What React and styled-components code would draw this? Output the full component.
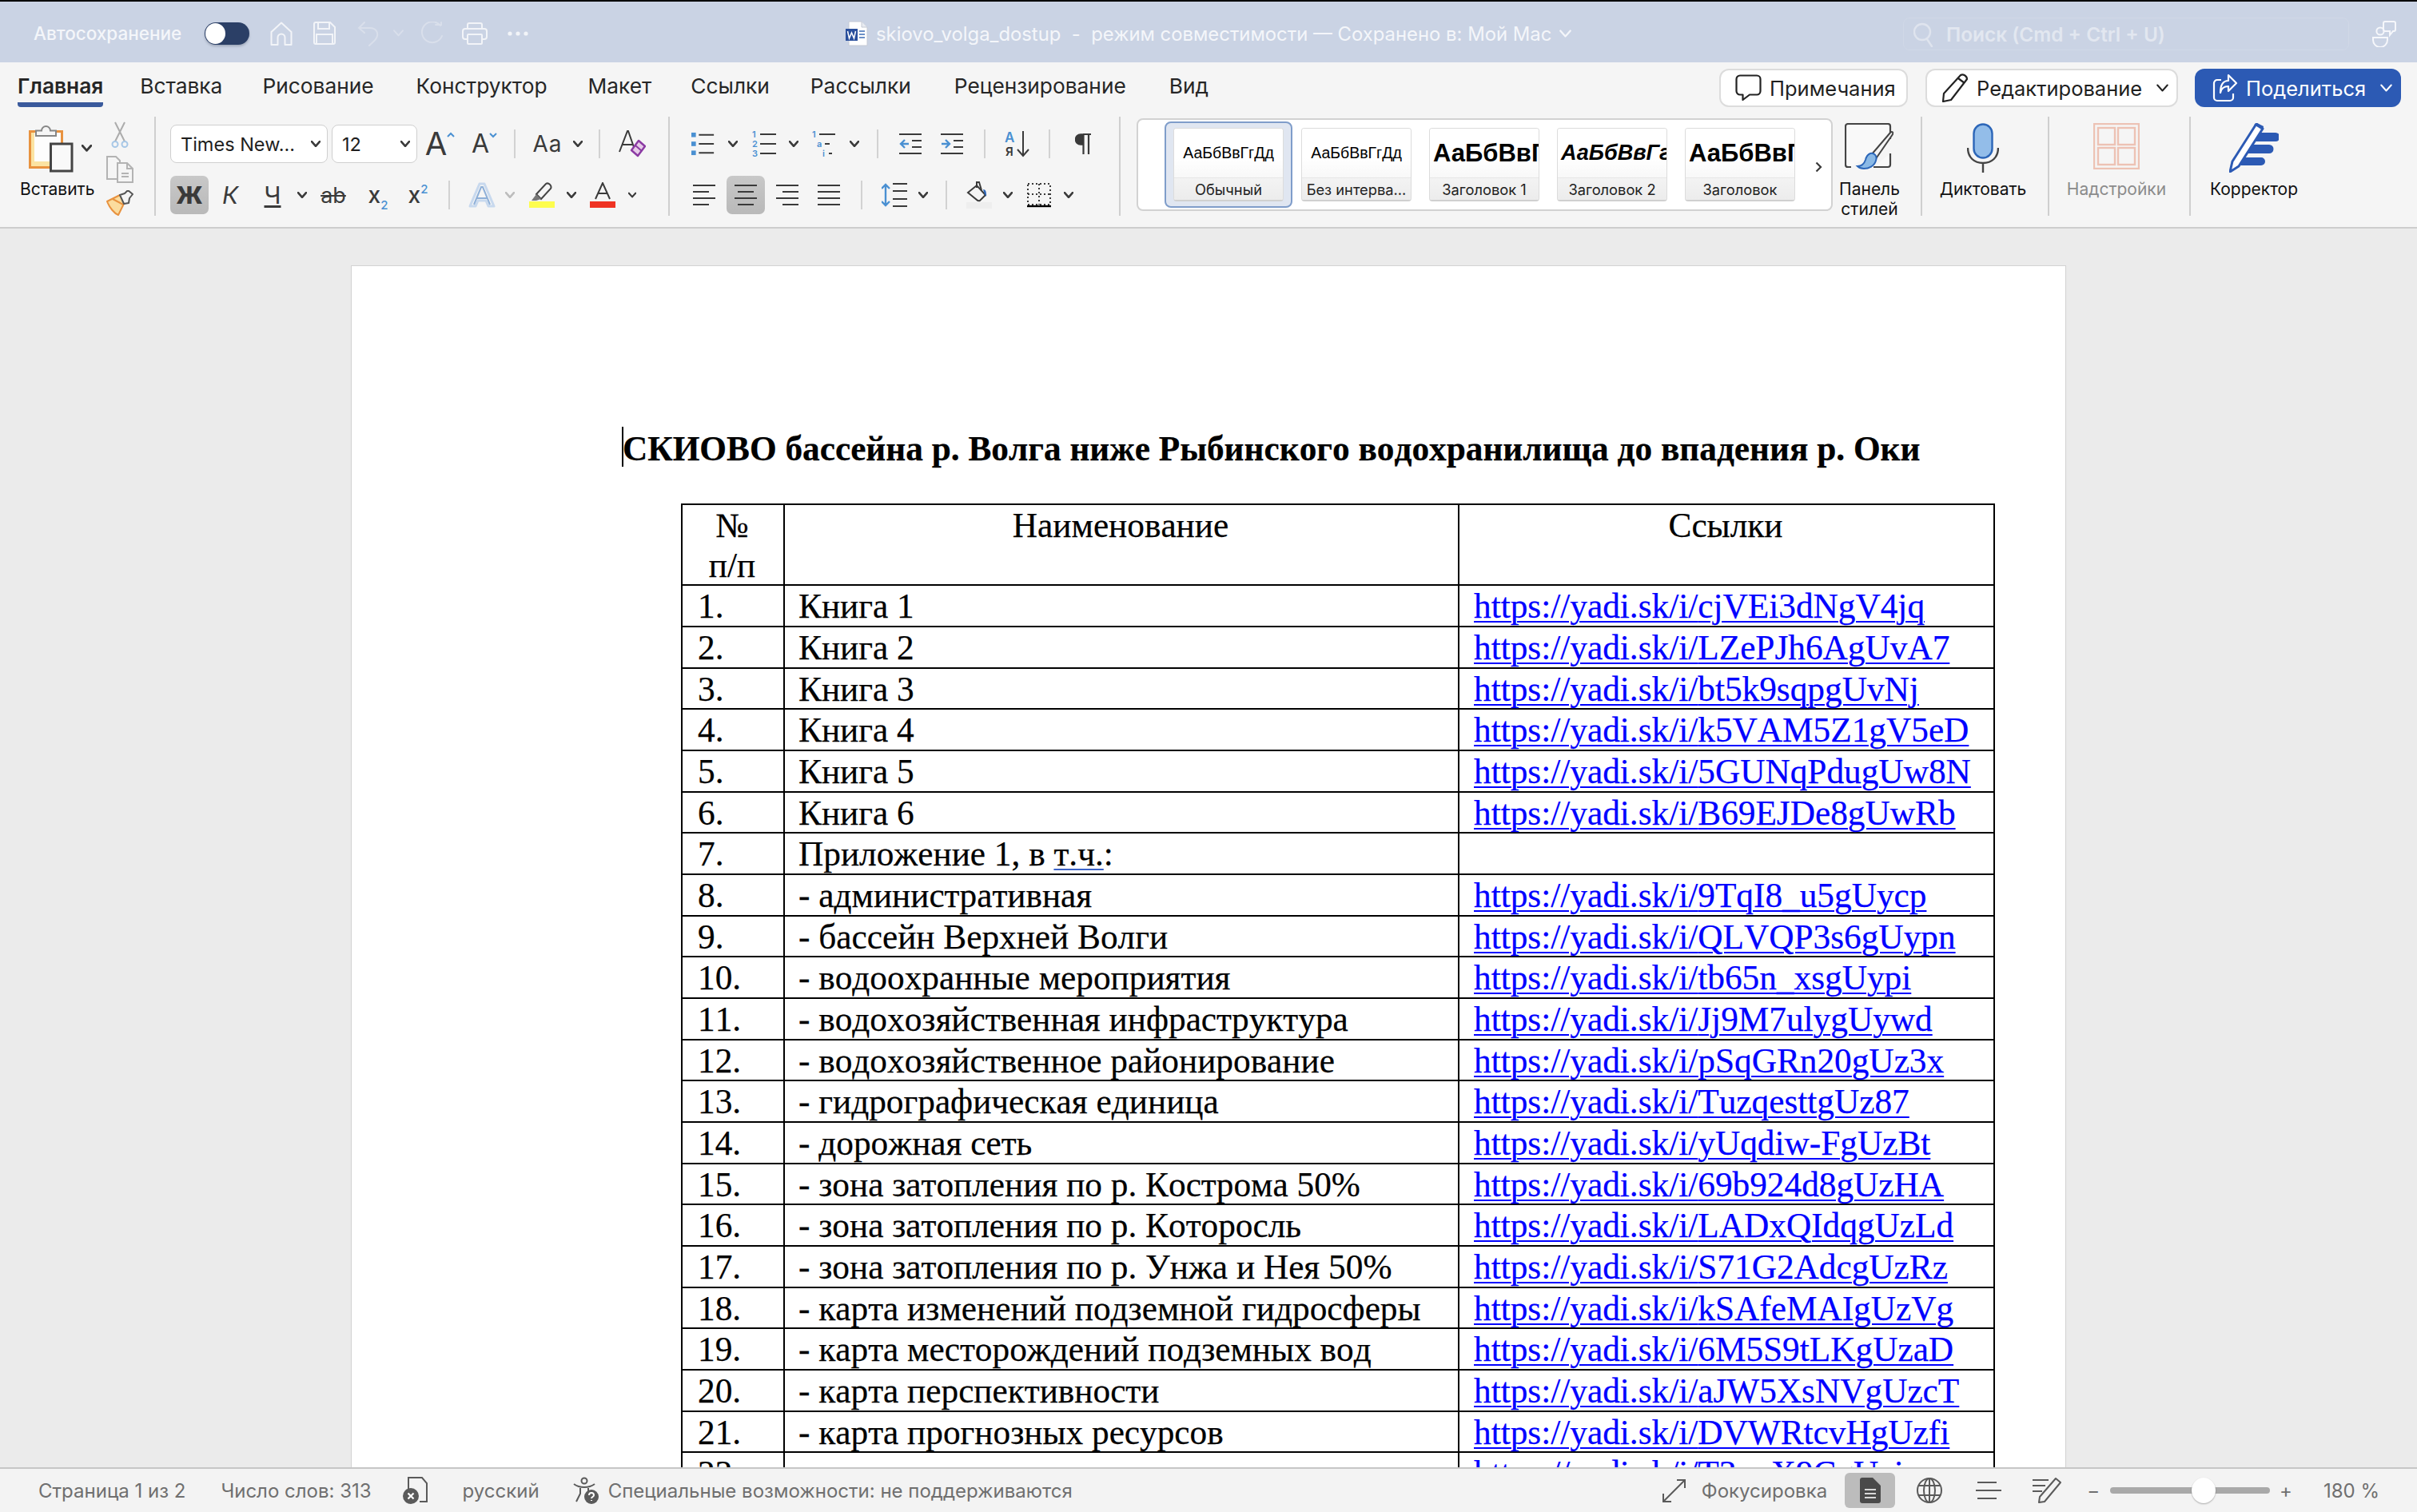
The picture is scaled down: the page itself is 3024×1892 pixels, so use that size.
import React from "react";
import styled, { createGlobalStyle } from "styled-components";

const GlobalStyle = createGlobalStyle`
  html, body {
    margin: 0;
    padding: 0;
    background: #ebebeb;
  }
`;

const uiFont = `"Inter", "Noto Sans", sans-serif`;

const Screen = styled.div`
  width: 3024px;
  height: 1892px;
  display: flex;
  flex-direction: column;
  overflow: hidden;
  font-family: ${uiFont};
`;

/* title bar */
const TitleBar = styled.header`
  flex: none;
  height: 73px;
  padding-top: 3px;
  border-top: 2px solid #000;
  background: #cad3e4;
  display: flex;
  align-items: center;
  color: #f4f6fa;
`;

const AutoSave = styled.span`
  width: 256px;
  padding-left: 42px;
  box-sizing: border-box;
  font-size: 22.5px;
  font-weight: 500;
  white-space: nowrap;
`;

const Toggle = styled.span`
  width: 56px;
  height: 28px;
  border-radius: 14px;
  background: #2b3f66;
  box-shadow: 0 2px 3px rgba(60, 70, 90, 0.3);
  display: flex;
  align-items: center;
  flex: none;

  &::before {
    content: "";
    width: 25px;
    height: 26px;
    margin-left: 1px;
    border-radius: 50%;
    background: #fff;
  }
`;

const QuickIcon = styled.span`
  flex: none;
  width: ${(p) => p.$w}px;
  margin-left: ${(p) => p.$ml || 0}px;
  display: flex;
  justify-content: center;
`;

const DocName = styled.div`
  position: absolute;
  left: 1057px;
  top: 4px;
  height: 76px;
  display: flex;
  align-items: center;
  gap: 10px;
  font-size: 23.85px;
  white-space: pre;
`;

const SearchBox = styled.div`
  position: absolute;
  left: 2381px;
  top: 22px;
  width: 558px;
  height: 41px;
  box-sizing: border-box;
  border: 1px solid #d0d8e7;
  border-radius: 8px;
  display: flex;
  align-items: center;
  gap: 15px;
  padding-left: 12px;
  color: #e2e7f0;
  font-size: 24.4px;
  font-weight: 600;
`;

const PeopleIcon = styled.span`
  position: absolute;
  left: 2968px;
  top: 26px;
  display: flex;
`;

/* ribbon */
const Ribbon = styled.section`
  flex: none;
  height: 208px;
  box-sizing: border-box;
  border-bottom: 2px solid #cdcdcd;
  background: #f5f5f5;
  display: flex;
  flex-direction: column;
`;

const TabRow = styled.div`
  height: 68px;
  flex: none;
  display: flex;
  align-items: flex-start;
`;

const TabList = styled.nav`
  display: flex;
  padding-left: 22px;
  flex: 1;
`;

const Tab = styled.span`
  flex: none;
  height: 56px;
  margin-right: ${(p) => p.$gap}px;
  box-sizing: border-box;
  padding-top: 13px;
  font-size: 26.3px;
  line-height: 34px;
  color: #262626;
  white-space: nowrap;
  font-weight: ${(p) => (p.$active ? 600 : 400)};
  border-bottom: 6px solid ${(p) => (p.$active ? "#3a5a9c" : "transparent")};
  border-radius: 0 0 4px 4px;
`;

const RibbonButton = styled.button`
  height: 48px;
  width: ${(p) => p.$w}px;
  margin: 8px ${(p) => p.$mr}px 0 0;
  padding: 0 0 0 ${(p) => p.$pl}px;
  box-sizing: border-box;
  display: flex;
  align-items: center;
  gap: ${(p) => p.$gap}px;
  border-radius: 12px;
  font-family: ${uiFont};
  font-size: 25.5px;
  border: ${(p) => (p.$primary ? "none" : "2px solid #dcdcdc")};
  background: ${(p) => (p.$primary ? "#2c5ab4" : "#fff")};
  color: ${(p) => (p.$primary ? "#fff" : "#1f1f1f")};
`;

const ButtonChevron = styled.span`
  display: flex;
  margin-left: 8px;
`;

const ToolRow = styled.div`
  flex: 1;
  display: flex;
  align-items: flex-start;
`;

const Rule = styled.span`
  flex: none;
  width: 2px;
  height: 124px;
  background: #cfcfcf;
`;

const ToolGroup = styled.div`
  flex: none;
  width: ${(p) => p.$w}px;
  box-sizing: border-box;
  padding-top: 10px;
  display: flex;
  flex-direction: column;
  gap: 16px;
`;

const ToolLine = styled.div`
  height: 48px;
  display: flex;
  align-items: center;
  padding-left: ${(p) => p.$pl}px;
`;

const Slot = styled.span`
  flex: none;
  width: ${(p) => p.$w}px;
  height: 48px;
  display: flex;
  align-items: center;
  justify-content: center;
  gap: ${(p) => p.$gap || 0}px;
  border-radius: 7px;
  color: #3a3a3a;
  background: ${(p) => (p.$active ? "linear-gradient(#c8c8c8, #b9b9b9)" : "transparent")};
`;

const LineRule = styled.span`
  width: 2px;
  height: 36px;
  background: #d2d2d2;
`;

const SelectBox = styled.span`
  flex: none;
  width: ${(p) => p.$w}px;
  height: 48px;
  margin-right: ${(p) => p.$mr || 0}px;
  box-sizing: border-box;
  border: 1.5px solid #cfcfcf;
  border-radius: 8px;
  background: #fff;
  padding: 0 8px 0 12px;
  display: flex;
  align-items: center;
  justify-content: space-between;
  font-size: 23.5px;
  color: #1e1e1e;
`;

const PasteGroup = styled.div`
  flex: none;
  width: 193px;
  height: 130px;
  display: grid;
  grid-template-columns: 128px 1fr;
`;

const PasteColumn = styled.div`
  padding: 10px 0 0 36px;
  display: flex;
  flex-direction: column;
`;

const PasteTop = styled.div`
  height: 60px;
  display: flex;
  gap: 10px;
  align-items: center;
`;

const PasteLabel = styled.span`
  margin: 8px 0 0 -11px;
  font-size: 21px;
  line-height: 26px;
  color: #111;
`;

const ClipColumn = styled.div`
  width: 34px;
  padding: 6px 0 0 5px;
  display: flex;
  flex-direction: column;
  align-items: center;
  gap: 9px;
`;

const Gallery = styled.div`
  flex: none;
  width: 871px;
  height: 116px;
  margin: 2px 0 0 20px;
  box-sizing: border-box;
  border: 2px solid #d2d2d2;
  border-radius: 8px;
  background: #fff;
  display: flex;
  align-items: center;
  padding-left: 33px;
  position: relative;
`;

const StyleFrame = styled.div`
  flex: none;
  width: 160px;
  height: 108px;
  box-sizing: border-box;
  display: flex;
  align-items: center;
  justify-content: center;
  border-radius: 8px;
  ${(p) => p.$selected && "border: 2px solid #7f9dca; background: #e0e6f1;"}
`;

const StyleCard = styled.div`
  width: 138px;
  height: 92px;
  box-sizing: border-box;
  border: 1px solid #dcdcdc;
  border-bottom: 2px solid #d0d0d0;
  border-radius: 4px;
  background: #fff;
  display: flex;
  flex-direction: column;
  overflow: hidden;
`;

const StylePreview = styled.div`
  height: 61px;
  flex: none;
  display: flex;
  align-items: center;
  justify-content: ${(p) => (p.$heading ? "flex-start" : "center")};
  padding-left: ${(p) => (p.$heading ? 4 : 0)}px;
  overflow: hidden;
  white-space: nowrap;
  color: #000;
  font-family: "Liberation Sans", sans-serif;
  font-size: ${(p) => p.$size}px;
  font-weight: ${(p) => (p.$heading ? 700 : 400)};
  font-style: ${(p) => (p.$italic ? "italic" : "normal")};
  background: linear-gradient(#fff 60%, #f8f8f8);
`;

const StyleCaption = styled.div`
  flex: 1;
  background: linear-gradient(#f3f3f3, #ececec);
  border-top: 1px solid #e6e6e6;
  display: flex;
  align-items: center;
  justify-content: center;
  font-size: 18.3px;
  color: #222;
  white-space: nowrap;
`;

const GalleryMore = styled.span`
  position: absolute;
  right: 11px;
  top: 52px;
  display: flex;
`;

const BigTool = styled.div`
  flex: none;
  width: ${(p) => p.$w}px;
  padding: 8px ${(p) => p.$pr || 0}px 0 0;
  display: flex;
  flex-direction: column;
  align-items: center;
  box-sizing: border-box;
`;

const BigIcon = styled.span`
  height: 70px;
  display: flex;
  align-items: flex-start;
  justify-content: center;
`;

const BigLabel = styled.span`
  font-size: 21px;
  line-height: 25px;
  text-align: center;
  white-space: pre-line;
  color: ${(p) => (p.$muted ? "#8b8b8b" : "#111")};
`;

/* document */
const Canvas = styled.main`
  flex: 1;
  min-height: 0;
  overflow: hidden;
  background: #ebebeb;
  padding: 46px 0 0 439px;
`;

const Page = styled.article`
  width: 2146px;
  box-sizing: border-box;
  background: #fff;
  border: 1px solid #d2d2d2;
  border-bottom: none;
  padding: 199px 0 0 339px;
  font-family: "Liberation Serif", "Times New Roman", serif;
  font-kerning: none;
  color: #000;
  -webkit-text-stroke: 0.25px currentColor;
`;

const DocTitle = styled.h1`
  position: relative;
  margin: 0 0 40px;
  font-size: 43.3px;
  line-height: 58px;
  font-weight: 700;
  white-space: nowrap;
`;

const Caret = styled.span`
  position: absolute;
  left: -1px;
  top: 2px;
  width: 2px;
  height: 50px;
  background: #000;
`;

const Table = styled.table`
  margin-left: 73px;
  width: 1642px;
  table-layout: fixed;
  border-collapse: collapse;
  font-size: 43.3px;
  line-height: 49.67px;
`;

const Cell = styled.td`
  box-sizing: border-box;
  border: 2px solid #000;
  padding: 0 ${(p) => (p.$center ? 19 : 17)}px 0 ${(p) => p.$pl || 17}px;
  vertical-align: top;
  white-space: nowrap;
  text-align: ${(p) => (p.$center ? "center" : "left")};
`;

const CellBody = styled.div`
  margin: 1px 0 -1px;
`;

const DocLink = styled.a`
  color: #0000ff;
  margin-left: 1px;
  text-decoration: underline;
  text-decoration-thickness: 2px;
  text-underline-offset: 4px;
`;

const Proofed = styled.span`
  text-decoration: underline;
  text-decoration-color: #3b62c8;
  text-decoration-thickness: 2px;
  text-underline-offset: 4px;
`;

/* status bar */
const StatusBar = styled.footer`
  flex: none;
  height: 56px;
  box-sizing: border-box;
  border-top: 2px solid #c6c6c6;
  background: #f3f3f3;
  display: flex;
  align-items: center;
  color: #6f6f6f;
  font-size: 24px;
  white-space: nowrap;
`;

const StatusSpacer = styled.span`
  flex: 1;
`;

const StatusText = styled.span`
  flex: none;
  margin-left: ${(p) => p.$ml}px;
  margin-right: ${(p) => p.$mr || 0}px;
`;

const StatusIcon = styled.span`
  flex: none;
  display: flex;
  align-items: center;
  justify-content: center;
  margin-left: ${(p) => p.$ml || 0}px;
  width: ${(p) => p.$w}px;
  height: 44px;
  border-radius: 6px;
  background: ${(p) => (p.$active ? "#bcbcbc" : "transparent")};
`;

const ZoomTrack = styled.span`
  flex: none;
  position: relative;
  width: 200px;
  height: 8px;
  margin-left: 13px;
  border-radius: 4px;
  background: #a9a9a9;
`;

const ZoomThumb = styled.span`
  position: absolute;
  left: 102px;
  top: -12px;
  width: 30px;
  height: 32px;
  border-radius: 50%;
  background: #fff;
  box-shadow: 0 1px 2px rgba(0, 0, 0, 0.3);
`;

/* icons */
const Chevron = ({ color = "#3a3a3a", w = 12, sw = 2.6 }) => (
  <svg width={w} height={w * 0.7} viewBox="0 0 12 8.4" fill="none">
    <path d="M1 1.2 6 6.8l5-5.6" stroke={color} strokeWidth={sw} strokeLinecap="round" strokeLinejoin="round" />
  </svg>
);

const HomeIcon = () => (
  <svg width="28" height="30" viewBox="0 0 28 30" fill="none" stroke="#f2f4f8" strokeWidth="2">
    <path d="M1.500 13 14 1.500 26.500 13v16h-8v-9a4.500 4.500 0 0 0-9 0v9h-8z" strokeLinejoin="round" />
  </svg>
);

const SaveIcon = () => (
  <svg width="28" height="29" viewBox="0 0 28 29" fill="none" stroke="#f2f4f8" strokeWidth="2">
    <path d="M3 1h18l6 6v19a2 2 0 0 1-2 2H3a2 2 0 0 1-2-2V3a2 2 0 0 1 2-2z" />
    <path d="M6 1v8h14V1M4 28V16h20v12" />
  </svg>
);

const UndoIcon = () => (
  <svg width="28" height="32" viewBox="0 0 28 32" fill="none" stroke="#d9dfeb" strokeWidth="2" strokeLinecap="round">
    <path d="M9 15 2 9l7-7M2 9h14c7 0 10 5 9 10-1 5-6 8-10 12" />
  </svg>
);

const RedoIcon = () => (
  <svg width="28" height="30" viewBox="0 0 28 30" fill="none" stroke="#d9dfeb" strokeWidth="2" strokeLinecap="round">
    <path d="M25 5a13 13 0 1 0 2 13M19 4h7V1" />
  </svg>
);

const PrintIcon = () => (
  <svg width="32" height="28" viewBox="0 0 32 28" fill="none" stroke="#f2f4f8" strokeWidth="2">
    <path d="M7 8V3a2 2 0 0 1 2-2h14a2 2 0 0 1 2 2v5" />
    <path d="M7 21H4a3 3 0 0 1-3-3v-7a3 3 0 0 1 3-3h24a3 3 0 0 1 3 3v7a3 3 0 0 1-3 3h-3" />
    <rect x="7" y="15" width="18" height="12" rx="1" />
  </svg>
);

const DotsIcon = () => (
  <svg width="26" height="6" viewBox="0 0 26 6" fill="#f2f4f8">
    <circle cx="3" cy="3" r="2.600" />
    <circle cx="13" cy="3" r="2.600" />
    <circle cx="23" cy="3" r="2.600" />
  </svg>
);

const WordFileIcon = () => (
  <svg width="29" height="32" viewBox="0 0 29 32">
    <path d="M5 1h16l7 7v23H5z" fill="#fff" stroke="#c4c9d4" />
    <path d="M21 1v7h7" fill="#e8ebf1" stroke="#c4c9d4" />
    <rect x="1" y="10" width="15" height="15" fill="#2a4f9c" />
    <path d="m3.500 13 2 9 3-7 3 7 2-9" fill="none" stroke="#fff" strokeWidth="1.500" />
    <path d="M18 13h7M18 17h7M18 21h7" stroke="#3d6cb5" strokeWidth="1.500" />
  </svg>
);

const SearchIcon = () => (
  <svg width="26" height="32" viewBox="0 0 26 32" fill="none" stroke="#dfe4ee" strokeWidth="2.400">
    <circle cx="11" cy="13" r="10" />
    <path d="m17 22 6 9" strokeLinecap="round" />
  </svg>
);

const PeopleGlyph = () => (
  <svg width="30" height="33" viewBox="0 0 30 33" fill="none" stroke="#f6f7fb" strokeWidth="2">
    <circle cx="10" cy="13" r="4.600" />
    <path d="M1 21h18v3a9 9 0 0 1-18 0z" />
    <path d="M16 1h11a2 2 0 0 1 2 2v8a2 2 0 0 1-2 2h-1l-4 5v-5h-6a2 2 0 0 1-2-2V3a2 2 0 0 1 2-2z" />
  </svg>
);

const CommentIcon = () => (
  <svg width="33" height="34" viewBox="0 0 33 34" fill="none" stroke="#222" strokeWidth="2.200">
    <path d="M6 1.500h21a4.500 4.500 0 0 1 4.500 4.500v15a4.500 4.500 0 0 1-4.500 4.500h-9L9.500 32v-6.500H6A4.500 4.500 0 0 1 1.500 21V6A4.500 4.500 0 0 1 6 1.500z" strokeLinejoin="round" />
  </svg>
);

const PenIcon = () => (
  <svg width="34" height="36" viewBox="0 0 34 36" fill="none" stroke="#222" strokeWidth="2.200" strokeLinejoin="round">
    <path d="M24 2c3-2 8 1 8 5L12 33l-10 2 1-10z" />
    <path d="m21 6 8 6" />
  </svg>
);

const ShareIcon = () => (
  <svg width="32" height="36" viewBox="0 0 32 36" fill="none" stroke="#fff" strokeWidth="2.200" strokeLinejoin="round">
    <path d="M11 8H6a4 4 0 0 0-4 4v18a4 4 0 0 0 4 4h16a4 4 0 0 0 4-4v-5" />
    <path d="M20 2l10 10-10 10v-6c-6 0-9 3-10 8 0-9 3-15 10-15z" />
  </svg>
);

const ClipboardIcon = () => (
  <svg width="56" height="62" viewBox="0 0 56 62">
    <rect x="1.500" y="9.500" width="40" height="45" fill="#fbe3a2" stroke="#e8923f" strokeWidth="3" />
    <path d="M7 11h33v36H7z" fill="#fdfdfd" />
    <path d="M9 15V8.500h7a5.500 5.500 0 0 1 11 0h7V15z" fill="#f6f6f6" stroke="#868686" strokeWidth="2" />
    <rect x="27.500" y="25" width="26.500" height="34" fill="#f9f9f9" stroke="#444" strokeWidth="3" />
  </svg>
);

const ScissorsIcon = () => (
  <svg width="22" height="34" viewBox="0 0 22 34" fill="none">
    <path d="M5 1l12 24M17 1 5 25" stroke="#acacac" strokeWidth="2" />
    <circle cx="5" cy="28.500" r="3.500" stroke="#a7c7e6" strokeWidth="2" />
    <circle cx="17" cy="28.500" r="3.500" stroke="#a7c7e6" strokeWidth="2" />
  </svg>
);

const CopyIcon = () => (
  <svg width="34" height="34" viewBox="0 0 34 34" fill="none" stroke="#b3b3b3" strokeWidth="2">
    <path d="M13 29H1V1h11l5 5v4" />
    <path d="M14 9h12l7 7v17H14z" fill="#f5f5f5" />
    <path d="M26 9v7h7M19 22h9M19 26h9" />
  </svg>
);

const BrushIcon = () => (
  <svg width="34" height="32" viewBox="0 0 34 32">
    <path d="M1 14 17 6l6 9-8 16c-5-2-11-9-14-17z" fill="#fbdc9e" stroke="#e8923f" strokeWidth="2" strokeLinejoin="round" />
    <path d="M8 11l13 7" stroke="#e8923f" strokeWidth="2" />
    <path d="M17 6l6-2 4-4 6 5-4 5-1 6-6 1z" fill="#f5f5f5" stroke="#555" strokeWidth="2" strokeLinejoin="round" />
  </svg>
);

const Glyph = styled.span`
  font-size: ${(p) => p.$size}px;
  line-height: 1;
  font-weight: ${(p) => p.$weight || 400};
  font-style: ${(p) => (p.$italic ? "italic" : "normal")};
  color: ${(p) => p.$color || "#3a3a3a"};
  text-decoration: ${(p) => p.$deco || "none"};
  letter-spacing: ${(p) => p.$track || 0}px;
  white-space: nowrap;
`;

const SmallMark = styled.span`
  font-size: 15px;
  line-height: 0;
  font-weight: 500;
  color: #4a90d2;
  vertical-align: ${(p) => (p.$low ? "-8px" : "12px")};
`;

const GrowMark = ({ down }) => (
  <svg width="10" height="8" viewBox="0 0 10 8" fill="none" style={{ marginBottom: 22 }}>
    <path d={down ? "M1 2l4 4 4-4" : "M1 6l4-4 4 4"} stroke="#4a90d2" strokeWidth="2" />
  </svg>
);

const ClearFormatIcon = () => (
  <svg width="34" height="34" viewBox="0 0 34 34" fill="none">
    <path d="M1 27 11 1h1l7 20" stroke="#3a3a3a" strokeWidth="2" />
    <path d="M5 18h12" stroke="#3a3a3a" strokeWidth="2" />
    <path d="m25 13 8 7-9 12-8-7z" fill="#e6cbe8" stroke="#8b3aa3" strokeWidth="2.400" strokeLinejoin="round" />
    <path d="m21 19 8 7" stroke="#8b3aa3" strokeWidth="2" />
  </svg>
);

const ListIcon = ({ kind }) => (
  <svg width="32" height="36" viewBox="0 0 32 36" fill="none">
    {kind === "bullet" && (
      <g fill="#4a90d2">
        <rect x="0" y="3" width="6" height="6" />
        <rect x="0" y="15" width="6" height="6" />
        <rect x="0" y="27" width="6" height="6" />
      </g>
    )}
    {kind === "bullet" && <path d="M10 6h20M10 18h20M10 30h20" stroke="#3a3a3a" strokeWidth="2" />}
    {kind === "number" && <path d="M11 6h20M11 18h20M11 30h20" stroke="#3a3a3a" strokeWidth="2" />}
    {kind === "multi" && <path d="M10 6h20M17 18h6M22 30h4" stroke="#3a3a3a" strokeWidth="2" />}
    {kind === "number" && (
      <g fill="#4a90d2" fontFamily="Inter, sans-serif" fontSize="11" fontWeight="600">
        <text x="1" y="10">1</text>
        <text x="1" y="22">2</text>
        <text x="1" y="34">3</text>
      </g>
    )}
    {kind === "multi" && (
      <g fill="#4a90d2" fontFamily="Inter, sans-serif" fontSize="11" fontWeight="600">
        <text x="1" y="10">1</text>
        <text x="7" y="22">a</text>
        <text x="14" y="34">i</text>
      </g>
    )}
  </svg>
);

const IndentIcon = ({ out }) => (
  <svg width="28" height="26" viewBox="0 0 28 26" fill="none">
    <path d="M0 1h28M0 25h28M16 9h12M16 17h12" stroke="#3a3a3a" strokeWidth="2" />
    {out ? (
      <path d="M12 13H2m5-5-5 5 5 5" stroke="#4a90d2" strokeWidth="2.400" />
    ) : (
      <path d="M1 13h10m-5-5 5 5-5 5" stroke="#4a90d2" strokeWidth="2.400" />
    )}
  </svg>
);

const SortIcon = () => (
  <svg width="34" height="38" viewBox="0 0 34 38" fill="none">
    <text x="1" y="17" fontFamily="Inter, sans-serif" fontSize="17" fontWeight="600" fill="#4a90d2">A</text>
    <text x="2" y="34" fontFamily="Inter, sans-serif" fontSize="15" fontWeight="600" fill="#3a3a3a">Я</text>
    <path d="M24 3v31m-7-8 7 8 7-8" stroke="#3a3a3a" strokeWidth="2" />
  </svg>
);

const PilcrowIcon = () => (
  <svg width="20" height="26" viewBox="0 0 20 26" fill="none">
    <path d="M10 1H7a6.500 6.500 0 0 0 0 13h3z" fill="#3a3a3a" stroke="#3a3a3a" strokeWidth="1.500" />
    <path d="M10.500 1v25M17 1v25M10 1h10" stroke="#3a3a3a" strokeWidth="2.200" />
  </svg>
);

const AlignIcon = ({ align }) => {
  const short = {
    left: "M0 9h20M0 25h20",
    center: "M4 9h20M4 25h20",
    right: "M8 9h20M8 25h20",
    justify: "M0 9h28M0 25h28",
  };
  return (
    <svg width="28" height="26" viewBox="0 0 28 26" fill="none" stroke="#3a3a3a" strokeWidth="2">
      <path d="M0 1h28M0 17h28" />
      <path d={short[align]} />
    </svg>
  );
};

const TextEffectIcon = () => (
  <svg width="34" height="32" viewBox="0 0 34 32" fill="none">
    <path d="M2 30 14 2h6l12 28h-7l-3-7H12l-3 7z" stroke="#c8d9ee" strokeWidth="3" strokeLinejoin="round" />
    <path d="M7 28 16 6h2l9 22M11 20h12" stroke="#8fb0d8" strokeWidth="2" />
  </svg>
);

const HighlightIcon = () => (
  <svg width="32" height="33" viewBox="0 0 32 33">
    <path d="m9 15 12-13c3-2 8 2 6 6L15 21z" fill="#f5f5f5" stroke="#444" strokeWidth="2" />
    <path d="m9 15 6 6-6 2H3z" fill="#777" />
    <rect x="0" y="24" width="32" height="8" fill="#fdfd4e" />
  </svg>
);

const FontColorIcon = () => (
  <svg width="32" height="33" viewBox="0 0 32 33" fill="none">
    <path d="M7 21 16 1l9 20M10 14h12" stroke="#3a3a3a" strokeWidth="2" />
    <rect x="0" y="24" width="32" height="8" fill="#ef3323" />
  </svg>
);

const LineSpacingIcon = () => (
  <svg width="32" height="30" viewBox="0 0 32 30" fill="none">
    <path d="M14 1h18M14 10h18M14 20h18M14 29h18" stroke="#3a3a3a" strokeWidth="2" />
    <path d="M5 2v26M0 7l5-5 5 5M0 23l5 5 5-5" stroke="#4a90d2" strokeWidth="2.400" />
  </svg>
);

const FillIcon = () => (
  <svg width="32" height="34" viewBox="0 0 32 34">
    <path d="m2 14 11-9 11 12-7 7c-2 1-3 0-4-1z" fill="none" stroke="#3a3a3a" strokeWidth="2" />
    <path d="M13 8V1h3l3 10" fill="none" stroke="#3a3a3a" strokeWidth="2" />
    <path d="M21 10c4 0 4 4 4 9-2-2-3-5-4-9z" fill="#2c66b8" />
    <rect x="0" y="26" width="32" height="8" fill="#eeeeee" />
  </svg>
);

const BordersIcon = () => (
  <svg width="30" height="31" viewBox="0 0 30 31" fill="none">
    <path d="M1 1h28v26H1zM15 1v26M1 14h28" stroke="#3a3a3a" strokeWidth="2" strokeDasharray="2 3" />
    <path d="M0 29h30" stroke="#000" strokeWidth="2.400" />
  </svg>
);

const StylesPaneIcon = () => (
  <svg width="62" height="60" viewBox="0 0 62 60" fill="none">
    <path d="M8 55H4a3 3 0 0 1-3-3V4a3 3 0 0 1 3-3h50a3 3 0 0 1 3 3v16M57 38v14a3 3 0 0 1-3 3H36" stroke="#444" strokeWidth="2.200" fill="#f9f9f9" />
    <path d="m33 40 24-28c2-2 4-1 3 2L38 46" stroke="#444" strokeWidth="2" fill="#f5f5f5" />
    <path d="M32 38c5-1 9 3 7 9-2 7-9 10-15 10-3 0-6-1-8-3 5 0 8-2 10-8 1-4 3-7 6-8z" fill="#8ab9e6" stroke="#2c66b8" strokeWidth="2" />
  </svg>
);

const MicIcon = () => (
  <svg width="40" height="62" viewBox="0 0 40 62" fill="none">
    <rect x="8.500" y="1.500" width="23" height="42" rx="11.500" fill="#93bde9" stroke="#2c66b8" strokeWidth="2.400" />
    <path d="M1 31c0 12 8 19 19 19s19-7 19-19M20 50v12" stroke="#444" strokeWidth="2.400" />
  </svg>
);

const AddinsIcon = () => (
  <svg width="58" height="58" viewBox="0 0 58 58" fill="none" stroke="#edc2b4" strokeWidth="2.400">
    <rect x="1" y="1" width="56" height="56" />
    <rect x="6" y="6" width="21" height="21" />
    <rect x="31" y="6" width="21" height="21" />
    <rect x="6" y="31" width="21" height="21" />
    <rect x="31" y="31" width="21" height="21" />
  </svg>
);

const EditorIcon = () => (
  <svg width="62" height="62" viewBox="0 0 62 62" fill="none">
    <path d="M34 16h24a5 5 0 0 1 0 11H28zM26 31h24a5 5 0 0 1 0 11H20zM18 47h22a5 5 0 0 1 0 10H14z" fill="#2c5ab4" transform="translate(0 -4)" />
    <path d="M34 1 4 48l-3 13 11-7L42 7z" fill="#fff" stroke="#2c5ab4" strokeWidth="3" strokeLinejoin="round" />
    <path d="m31 2 11 7 1-5-8-4z" fill="#2c5ab4" />
  </svg>
);

const SheetCheckIcon = () => (
  <svg width="32" height="34" viewBox="0 0 32 34" fill="none">
    <path d="M14 1h11l6 7v23h-9M8 16V1h6" stroke="#5a5a5a" strokeWidth="2" />
    <circle cx="11" cy="24" r="10" fill="#5a5a5a" />
    <path d="m7.500 20.500 7 7m0-7-7 7" stroke="#fff" strokeWidth="2.200" />
  </svg>
);

const AccessIcon = () => (
  <svg width="34" height="34" viewBox="0 0 34 34" fill="none">
    <circle cx="15" cy="5" r="3.500" stroke="#5a5a5a" strokeWidth="2" />
    <path d="M2 9c4 3 7 4 13 4s9-1 13-4M10 14v7L5 31M20 14v4" stroke="#5a5a5a" strokeWidth="2" />
    <circle cx="24" cy="25" r="9" fill="#5a5a5a" />
    <path d="M21 23c0-4 6-4 6 0 0 2-3 2-3 4m0 2v1" stroke="#fff" strokeWidth="2" />
  </svg>
);

const FocusIcon = () => (
  <svg width="29" height="29" viewBox="0 0 29 29" fill="none" stroke="#5a5a5a" strokeWidth="2">
    <path d="M18 1h10v10M28 1 1 28M1 18v10h10" />
  </svg>
);

const PrintLayoutIcon = () => (
  <svg width="26" height="32" viewBox="0 0 26 32">
    <path d="M3 0h13l10 10v19a3 3 0 0 1-3 3H3a3 3 0 0 1-3-3V3a3 3 0 0 1 3-3z" fill="#4a4a4a" />
    <path d="M6 15h14M6 20h14M6 25h14" stroke="#d8d8d8" strokeWidth="2" />
  </svg>
);

const GlobeIcon = () => (
  <svg width="32" height="32" viewBox="0 0 32 32" fill="none" stroke="#5a5a5a" strokeWidth="2">
    <circle cx="16" cy="16" r="15" />
    <ellipse cx="16" cy="16" rx="7" ry="15" />
    <path d="M2 10h28M2 22h28M16 1v30" />
  </svg>
);

const OutlineIcon = () => (
  <svg width="32" height="24" viewBox="0 0 32 24" fill="none" stroke="#5a5a5a" strokeWidth="2.200">
    <path d="M2 2h24M0 12h32M2 22h24" />
  </svg>
);

const DraftIcon = () => (
  <svg width="36" height="32" viewBox="0 0 36 32" fill="none" stroke="#5a5a5a" strokeWidth="2">
    <path d="M0 3h20M0 10h16M0 17h12" />
    <path d="m29 1 6 5-20 24-7 1 1-7z" strokeLinejoin="round" />
  </svg>
);

const links = [
  "cjVEi3dNgV4jq", "LZePJh6AgUvA7", "bt5k9sqpgUvNj", "k5VAM5Z1gV5eD", "5GUNqPdugUw8N", "B69EJDe8gUwRb",
  null, "9TqI8_u5gUycp", "QLVQP3s6gUypn", "tb65n_xsgUypi", "Jj9M7ulygUywd", "pSqGRn20gUz3x",
  "TuzqesttgUz87", "yUqdiw-FgUzBt", "69b924d8gUzHA", "LADxQIdqgUzLd", "S71G2AdcgUzRz", "kSAfeMAIgUzVg",
  "6M5S9tLKgUzaD", "aJW5XsNVgUzcT", "DVWRtcvHgUzfi", "T3xpX9CgUzj",
];

const names = [
  "Книга 1", "Книга 2", "Книга 3", "Книга 4", "Книга 5", "Книга 6",
  <>Приложение 1, в <Proofed>т.ч.</Proofed>:</>,
  "- административная", "- бассейн Верхней Волги", "- водоохранные мероприятия",
  "- водохозяйственная инфраструктура", "- водохозяйственное районирование",
  "- гидрографическая единица", "- дорожная сеть", "- зона затопления по р. Кострома 50%",
  "- зона затопления по р. Которосль", "- зона затопления по р. Унжа и Нея 50%",
  "- карта изменений подземной гидросферы", "- карта месторождений подземных вод",
  "- карта перспективности", "- карта прогнозных ресурсов", "\u00a0",
];

const tabs = [
  ["Главная", 46, true], ["Вставка", 50], ["Рисование", 53], ["Конструктор", 51], ["Макет", 49],
  ["Ссылки", 51], ["Рассылки", 54], ["Рецензирование", 54], ["Вид", 0],
];

const styleCards = [
  { text: "АаБбВвГгДд", caption: "Обычный", selected: true, size: 19.5 },
  { text: "АаБбВвГгДд", caption: "Без интерва...", size: 19.5 },
  { text: "АаБбВвГг", caption: "Заголовок 1", heading: true, size: 31 },
  { text: "АаБбВвГгД", caption: "Заголовок 2", heading: true, italic: true, size: 27 },
  { text: "АаБбВвГг", caption: "Заголовок", heading: true, size: 31 },
];

const App = () => (
  <Screen>
    <GlobalStyle />
    <TitleBar>
      <AutoSave>Автосохранение</AutoSave>
      <Toggle />
      <QuickIcon $w={28} $ml={26}><HomeIcon /></QuickIcon>
      <QuickIcon $w={28} $ml={26}><SaveIcon /></QuickIcon>
      <QuickIcon $w={28} $ml={27}><UndoIcon /></QuickIcon>
      <QuickIcon $w={13} $ml={17}><Chevron color="#d9dfeb" w={13} sw={1.8} /></QuickIcon>
      <QuickIcon $w={28} $ml={21}><RedoIcon /></QuickIcon>
      <QuickIcon $w={32} $ml={24}><PrintIcon /></QuickIcon>
      <QuickIcon $w={26} $ml={25}><DotsIcon /></QuickIcon>
      <DocName>
        <WordFileIcon />
        <span>skiovo_volga_dostup  -  режим совместимости — Сохранено в: Мой Mac</span>
        <Chevron color="#f4f6fa" w={15} sw={1.8} />
      </DocName>
      <SearchBox>
        <SearchIcon />
        <span>Поиск (Cmd + Ctrl + U)</span>
      </SearchBox>
      <PeopleIcon><PeopleGlyph /></PeopleIcon>
    </TitleBar>

    <Ribbon>
      <TabRow>
        <TabList>
          {tabs.map(([label, gap, active]) => (
            <Tab key={label} $gap={gap} $active={active}>{label}</Tab>
          ))}
        </TabList>
        <RibbonButton $w={236} $mr={22} $pl={18} $gap={10}>
          <CommentIcon />
          Примечания
        </RibbonButton>
        <RibbonButton $w={316} $mr={21} $pl={18} $gap={10}>
          <PenIcon />
          Редактирование
          <ButtonChevron><Chevron color="#222" w={15} sw={1.6} /></ButtonChevron>
        </RibbonButton>
        <RibbonButton $w={258} $mr={20} $pl={22} $gap={10} $primary>
          <ShareIcon />
          Поделиться
          <ButtonChevron><Chevron color="#fff" w={15} sw={1.6} /></ButtonChevron>
        </RibbonButton>
      </TabRow>

      <ToolRow>
        <PasteGroup>
          <PasteColumn>
            <PasteTop>
              <ClipboardIcon />
              <Chevron w={13} />
            </PasteTop>
            <PasteLabel>Вставить</PasteLabel>
          </PasteColumn>
          <ClipColumn>
            <ScissorsIcon />
            <CopyIcon />
            <BrushIcon />
          </ClipColumn>
        </PasteGroup>
        <Rule />

        <ToolGroup $w={641}>
          <ToolLine $pl={18}>
            <SelectBox $w={197} $mr={5}>Times New...<Chevron w={12} /></SelectBox>
            <SelectBox $w={107}>12<Chevron w={12} /></SelectBox>
            <Slot $w={57}><Glyph $size={40}>A</Glyph><GrowMark /></Slot>
            <Slot $w={54}><Glyph $size={32}>A</Glyph><GrowMark down /></Slot>
            <Slot $w={22}><LineRule /></Slot>
            <Slot $w={85} $gap={13}><Glyph $size={28} $track={1}>Aa</Glyph><Chevron w={12} /></Slot>
            <Slot $w={20}><LineRule /></Slot>
            <Slot $w={62}><ClearFormatIcon /></Slot>
          </ToolLine>
          <ToolLine $pl={18}>
            <Slot $w={48} $active><Glyph $size={30} $weight={800}>Ж</Glyph></Slot>
            <Slot $w={54}><Glyph $size={30} $italic>К</Glyph></Slot>
            <Slot $w={52}><Glyph $size={30} $deco="underline">Ч</Glyph></Slot>
            <Slot $w={21}><Chevron w={12} /></Slot>
            <Slot $w={58}><Glyph $size={27} $deco="line-through">ab</Glyph></Slot>
            <Slot $w={54}><Glyph $size={28} $weight={500}>x<SmallMark $low>2</SmallMark></Glyph></Slot>
            <Slot $w={46}><Glyph $size={28} $weight={500}>x<SmallMark>2</SmallMark></Glyph></Slot>
            <Slot $w={32}><LineRule /></Slot>
            <Slot $w={50}><TextEffectIcon /></Slot>
            <Slot $w={20}><Chevron color="#bdbdbd" w={12} /></Slot>
            <Slot $w={60}><HighlightIcon /></Slot>
            <Slot $w={14}><Chevron w={12} /></Slot>
            <Slot $w={64}><FontColorIcon /></Slot>
            <Slot $w={10}><Chevron w={12} /></Slot>
          </ToolLine>
        </ToolGroup>
        <Rule />

        <ToolGroup $w={562}>
          <ToolLine $pl={27}>
            <Slot $w={30}><ListIcon kind="bullet" /></Slot>
            <Slot $w={44}><Chevron w={12} /></Slot>
            <Slot $w={34}><ListIcon kind="number" /></Slot>
            <Slot $w={40}><Chevron w={12} /></Slot>
            <Slot $w={36}><ListIcon kind="multi" /></Slot>
            <Slot $w={40}><Chevron w={12} /></Slot>
            <Slot $w={18}><LineRule /></Slot>
            <Slot $w={64}><IndentIcon out /></Slot>
            <Slot $w={40}><IndentIcon /></Slot>
            <Slot $w={42}><LineRule /></Slot>
            <Slot $w={40}><SortIcon /></Slot>
            <Slot $w={40}><LineRule /></Slot>
            <Slot $w={44}><PilcrowIcon /></Slot>
          </ToolLine>
          <ToolLine $pl={15}>
            <Slot $w={56}><AlignIcon align="left" /></Slot>
            <Slot $w={48} $active><AlignIcon align="center" /></Slot>
            <Slot $w={56}><AlignIcon align="right" /></Slot>
            <Slot $w={48}><AlignIcon align="justify" /></Slot>
            <Slot $w={34}><LineRule /></Slot>
            <Slot $w={48}><LineSpacingIcon /></Slot>
            <Slot $w={24}><Chevron w={12} /></Slot>
            <Slot $w={34}><LineRule /></Slot>
            <Slot $w={48}><FillIcon /></Slot>
            <Slot $w={24}><Chevron w={12} /></Slot>
            <Slot $w={54}><BordersIcon /></Slot>
            <Slot $w={20}><Chevron w={12} /></Slot>
          </ToolLine>
        </ToolGroup>
        <Rule />

        <Gallery>
          {styleCards.map((card) => (
            <StyleFrame key={card.caption} $selected={card.selected}>
              <StyleCard>
                <StylePreview $heading={card.heading} $italic={card.italic} $size={card.size}>{card.text}</StylePreview>
                <StyleCaption>{card.caption}</StyleCaption>
              </StyleCard>
            </StyleFrame>
          ))}
          <GalleryMore>
            <svg width="9" height="14" viewBox="0 0 9 14" fill="none">
              <path d="m1.500 1.500 5.500 5.500-5.500 5.500" stroke="#3a3a3a" strokeWidth="2.200" />
            </svg>
          </GalleryMore>
        </Gallery>

        <BigTool $w={110} $pr={18}>
          <BigIcon><StylesPaneIcon /></BigIcon>
          <BigLabel>{"Панель\nстилей"}</BigLabel>
        </BigTool>
        <Rule />
        <BigTool $w={157} $pr={5}>
          <BigIcon><MicIcon /></BigIcon>
          <BigLabel>Диктовать</BigLabel>
        </BigTool>
        <Rule />
        <BigTool $w={175} $pr={7}>
          <BigIcon><AddinsIcon /></BigIcon>
          <BigLabel $muted>Надстройки</BigLabel>
        </BigTool>
        <Rule />
        <BigTool $w={158}>
          <BigIcon><EditorIcon /></BigIcon>
          <BigLabel>Корректор</BigLabel>
        </BigTool>
      </ToolRow>
    </Ribbon>

    <Canvas>
      <Page>
        <DocTitle>
          <Caret />
          СКИОВО бассейна р. Волга ниже Рыбинского водохранилища до впадения р. Оки
        </DocTitle>
        <Table>
          <colgroup>
            <col style={{ width: 128 }} />
            <col style={{ width: 844 }} />
            <col style={{ width: 670 }} />
          </colgroup>
          <tbody>
            <tr>
              <Cell $center><CellBody>№<br />п/п</CellBody></Cell>
              <Cell $center><CellBody>Наименование</CellBody></Cell>
              <Cell $center><CellBody>Ссылки</CellBody></Cell>
            </tr>
            {names.map((name, i) => (
              <tr key={i}>
                <Cell $pl={19}><CellBody>{i + 1}.</CellBody></Cell>
                <Cell><CellBody>{name}</CellBody></Cell>
                <Cell>
                  <CellBody>
                    {links[i] ? <DocLink href="#">https://yadi.sk/i/{links[i]}</DocLink> : "\u00a0"}
                  </CellBody>
                </Cell>
              </tr>
            ))}
          </tbody>
        </Table>
      </Page>
    </Canvas>

    <StatusBar>
      <StatusText $ml={48}>Страница 1 из 2</StatusText>
      <StatusText $ml={44}>Число слов: 313</StatusText>
      <StatusIcon $ml={38} $w={32}><SheetCheckIcon /></StatusIcon>
      <StatusText $ml={44}>русский</StatusText>
      <StatusIcon $ml={41} $w={34}><AccessIcon /></StatusIcon>
      <StatusText $ml={11}>Специальные возможности: не поддерживаются</StatusText>
      <StatusSpacer />
      <StatusIcon $w={29}><FocusIcon /></StatusIcon>
      <StatusText $ml={20}>Фокусировка</StatusText>
      <StatusIcon $ml={22} $w={63} $active><PrintLayoutIcon /></StatusIcon>
      <StatusIcon $ml={27} $w={32}><GlobeIcon /></StatusIcon>
      <StatusIcon $ml={42} $w={32}><OutlineIcon /></StatusIcon>
      <StatusIcon $ml={39} $w={36}><DraftIcon /></StatusIcon>
      <StatusText $ml={32}>−</StatusText>
      <ZoomTrack><ZoomThumb /></ZoomTrack>
      <StatusText $ml={12}>+</StatusText>
      <StatusText $ml={39} $mr={47}>180 %</StatusText>
    </StatusBar>
  </Screen>
);

export default App;
